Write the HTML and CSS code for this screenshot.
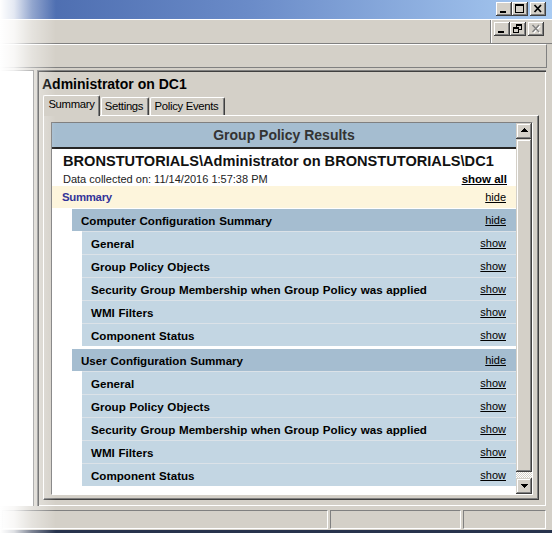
FILE: index.html
```html
<!DOCTYPE html>
<html lang="en">
<head>
<meta charset="utf-8">
<title>Group Policy Results</title>
<link rel="stylesheet" href="styles.css">
</head>
<body>
<div class="window">
  <div class="titlebar">
    <span class="cbtn"><svg viewBox="0 0 16 14" width="16" height="14"><rect x="4" y="9" width="6" height="2" fill="#000"/></svg></span>
    <span class="cbtn"><svg viewBox="0 0 16 14" width="16" height="14"><path fill="#000" fill-rule="evenodd" d="M3 2h9v9H3z M4 4h7v6H4z"/></svg></span>
    <span class="cbtn gap"><svg viewBox="0 0 16 14" width="16" height="14"><path stroke="#000" stroke-width="1.7" fill="none" d="M4.5 3 L11 10 M11 3 L4.5 10"/></svg></span>
  </div>
  <div class="menubar">
    <div class="mdi-btns">
      <span class="cbtn"><svg viewBox="0 0 16 14" width="16" height="14"><rect x="4" y="9" width="6" height="2" fill="#000"/></svg></span>
      <span class="cbtn"><svg viewBox="0 0 16 14" width="16" height="14"><path fill="#000" fill-rule="evenodd" d="M6 2h6v6H6z M7 4h4v3H7z"/><rect x="3" y="5" width="6" height="6" fill="#d4d0c8"/><path fill="#000" fill-rule="evenodd" d="M3 5h6v6H3z M4 7h4v3H4z"/></svg></span>
      <span class="cbtn gap"><svg viewBox="0 0 16 14" width="16" height="14"><path stroke="#fff" stroke-width="1.5" fill="none" d="M5.5 4 L12 11 M12 4 L5.5 11"/><path stroke="#808080" stroke-width="1.5" fill="none" d="M4.5 3 L11 10 M11 3 L4.5 10"/></svg></span>
    </div>
  </div>
  <div class="toolbar"></div>
  <div class="main">
    <div class="leftpane"></div>
    <div class="rightpane">
      <div class="heading">Administrator on DC1</div>
      <div class="tabs">
        <span class="tab tab-active">Summary</span>
        <span class="tab tab-settings">Settings</span>
        <span class="tab tab-events">Policy Events</span>
      </div>
      <div class="tabpanel">
        <div class="browser">
          <div class="report">
            <div class="gp-title">Group Policy Results</div>
            <div class="gp-info">
              <div class="gp-user">BRONSTUTORIALS\Administrator on BRONSTUTORIALS\DC1</div>
              <div class="gp-date"><span>Data collected on: 11/14/2016 1:57:38 PM</span><span class="link showall">show all</span></div>
            </div>
            <div class="summary-row"><span class="summary-label">Summary</span><span class="link">hide</span></div>
            <div class="section">
              <div class="sec-head"><span>Computer Configuration Summary</span><span class="link">hide</span></div>
              <div class="row"><span>General</span><span class="link">show</span></div>
              <div class="row"><span>Group Policy Objects</span><span class="link">show</span></div>
              <div class="row"><span>Security Group Membership when Group Policy was applied</span><span class="link">show</span></div>
              <div class="row"><span>WMI Filters</span><span class="link">show</span></div>
              <div class="row"><span>Component Status</span><span class="link">show</span></div>
            </div>
            <div class="section section-user">
              <div class="sec-head"><span>User Configuration Summary</span><span class="link">hide</span></div>
              <div class="row"><span>General</span><span class="link">show</span></div>
              <div class="row"><span>Group Policy Objects</span><span class="link">show</span></div>
              <div class="row"><span>Security Group Membership when Group Policy was applied</span><span class="link">show</span></div>
              <div class="row"><span>WMI Filters</span><span class="link">show</span></div>
              <div class="row"><span>Component Status</span><span class="link">show</span></div>
            </div>
          </div>
          <div class="vscroll">
            <div class="sbtn"><svg viewBox="0 0 16 16" width="16" height="16"><path fill="#000" d="M5 9h7v-1h-1v-1h-1v-1h-1v-1h-1v1h-1v1h-1v1h-1z"/></svg></div>
            <div class="thumb"></div>
            <div class="track"></div>
            <div class="sbtn"><svg viewBox="0 0 16 16" width="16" height="16"><path fill="#000" d="M5 6h7v1h-1v1h-1v1h-1v1h-1v-1h-1v-1h-1v-1h-1z"/></svg></div>
          </div>
        </div>
      </div>
    </div>
  </div>
  <div class="statusbar">
    <div class="spanel sp1"></div>
    <div class="spanel sp2"></div>
    <div class="spanel sp3"></div>
  </div>
  <div class="bottomedge"></div>
  <div class="fade"></div>
</div>
</body>
</html>
```

FILE: styles.css
```css
* { box-sizing: border-box; }
html, body { margin: 0; padding: 0; }
body {
  width: 552px;
  height: 533px;
  overflow: hidden;
  background: #d4d0c8;
  font-family: "Liberation Sans", Arial, sans-serif;
  color: #000;
}
.window {
  position: relative;
  width: 552px;
  height: 533px;
  display: flex;
  flex-direction: column;
  background: #d4d0c8;
}

/* caption */
.titlebar {
  height: 19px;
  flex: none;
  display: flex;
  justify-content: flex-end;
  align-items: flex-start;
  padding: 2px 6px 0 0;
  background: linear-gradient(to right, #4767ab 0%, #6a8bc8 45%, #a9cbf2 100%);
}
.cbtn {
  display: block;
  width: 16px;
  height: 14px;
  background: #d4d0c8;
  box-shadow: inset -1px -1px #404040, inset 1px 1px #fff, inset -2px -2px #808080, inset 2px 2px #d4d0c8;
}
.cbtn svg { display: block; }
.cbtn.gap { margin-left: 2px; }

.menubar {
  height: 25px;
  flex: none;
  border-top: 1px solid #fff;
  border-bottom: 1px solid #808080;
  display: flex;
  justify-content: flex-end;
}
.mdi-btns {
  display: flex;
  align-items: flex-start;
  padding: 2px 8px 0 2px;
  border-left: 1px solid #fff;
  box-shadow: -1px 0 #808080;
}

.toolbar {
  height: 24px;
  flex: none;
  border-top: 1px solid #fff;
  border-bottom: 1px solid #808080;
  border-right: 1px solid #808080;
  width: 547px;
}

/* main area */
.main {
  flex: none;
  margin-top: 2px;
  height: 436px;
  display: flex;
  gap: 3px;
}
.leftpane {
  width: 34px;
  background: #fff;
  border-top: 1px solid #808080;
  border-right: 1px solid #808080;
}
.rightpane {
  width: 509px;
  padding: 6px 0 0 5px;
  box-shadow: inset 1px 1px #808080, inset 2px 2px #404040, inset -1px -1px #fff, inset -2px -2px #d4d0c8;
}
.heading {
  font-weight: bold;
  font-size: 14px;
  line-height: 16px;
  height: 16px;
  white-space: nowrap;
}
.tabs {
  margin: 3px 0 0 1px;
  height: 20px;
  display: flex;
  align-items: flex-end;
}
.tab {
  height: 18px;
  font-size: 11.3px;
  letter-spacing: -0.3px;
  line-height: 16px;
  text-align: center;
  white-space: nowrap;
  background: #d4d0c8;
  border-top: 1px solid #fff;
  border-left: 1px solid #fff;
  border-right: 1px solid #404040;
  box-shadow: inset -1px 0 #808080;
  border-radius: 2px 2px 0 0;
}
.tab-active {
  position: relative;
  z-index: 1;
  width: 57px;
  height: 21px;
  margin-bottom: -1px;
}
.tab-settings { width: 48px; margin-left: 1px; padding-right: 2px; }
.tab-events { width: 75px; margin-left: 1px; padding-right: 2px; }

.tabpanel {
  margin-left: 1px;
  width: 496px;
  height: 385px;
  padding: 6px 5px 4px 7px;
  border-top: 1px solid #fff;
  border-left: 1px solid #fff;
  border-right: 1px solid #404040;
  border-bottom: 1px solid #404040;
  box-shadow: inset -1px -1px #808080;
}
.browser {
  width: 482px;
  height: 373px;
  border: 1px solid;
  border-color: #808080 #fff #fff #808080;
  display: flex;
}
.report {
  width: 464px;
  height: 371px;
  background: #fff;
  overflow: hidden;
}
.link {
  text-decoration: underline;
  font-weight: normal;
  font-size: 11px;
  letter-spacing: 0;
  word-spacing: 0;
  color: #000;
}
.gp-title {
  height: 24px;
  line-height: 24px;
  background: #a5bdd0;
  color: #333;
  font-weight: bold;
  font-size: 14px;
  text-align: center;
  border-bottom: 2px solid #262626;
  box-sizing: content-box;
}
.gp-info {
  height: 37px;
  padding: 3px 9px 0 11px;
}
.gp-user {
  font-weight: bold;
  font-size: 14.6px;
  line-height: 18px;
  white-space: nowrap;
  color: #111;
}
.gp-date {
  margin-top: 3px;
  line-height: 13px;
  font-size: 11px;
  display: flex;
  justify-content: space-between;
  align-items: baseline;
  color: #222;
}
.gp-date .showall {
  font-weight: bold;
  font-size: 11.5px;
}
.summary-row {
  height: 22px;
  background: #fdf5dc;
  display: flex;
  align-items: center;
  justify-content: space-between;
  padding: 0 10px 0 10px;
}
.summary-label {
  font-weight: bold;
  font-size: 11.4px;
  letter-spacing: -0.3px;
  color: #333399;
}
.section {
  margin: 1px 0 0 20px;
  font-weight: bold;
  font-size: 11.6px;
  word-spacing: 0.5px;
}
.section-user { margin-top: 3px; }
.sec-head {
  height: 22px;
  background: #a5bdd0;
  display: flex;
  align-items: center;
  justify-content: space-between;
  padding: 0 10px 0 9px;
  white-space: nowrap;
}
.row {
  margin-left: 10px;
  height: 23px;
  border-top: 1px solid #dbe2e8;
  background: #c3d6e3;
  display: flex;
  align-items: center;
  justify-content: space-between;
  padding: 0 10px 0 9px;
  white-space: nowrap;
}

/* scrollbar */
.vscroll {
  width: 16px;
  height: 371px;
  display: flex;
  flex-direction: column;
}
.sbtn, .thumb {
  background: #d4d0c8;
  box-shadow: inset -1px -1px #404040, inset 1px 1px #d4d0c8, inset -2px -2px #808080, inset 2px 2px #fff;
}
.sbtn { height: 16px; flex: none; }
.sbtn svg { display: block; }
.thumb { height: 333px; flex: none; }
.track {
  flex: 1;
  background: repeating-conic-gradient(#fff 0 25%, #d4d0c8 0 50%) 0 0 / 2px 2px;
}

/* status bar */
.statusbar {
  flex: none;
  margin-top: 2px;
  height: 22px;
  padding: 2px 0 0 2px;
  display: flex;
  gap: 2px;
}
.spanel {
  height: 19px;
  border: 1px solid;
  border-color: #808080 #fff #fff #808080;
}
.sp1 { width: 326px; }
.sp2 { width: 131px; }
.sp3 { width: 83px; }
.bottomedge {
  flex: none;
  height: 3px;
  background: #27334d;
}

/* screenshot edge fade */
.fade {
  position: absolute;
  left: 0;
  top: 0;
  width: 56px;
  height: 533px;
  pointer-events: none;
  background: linear-gradient(to right, #fff 0px, rgba(255,255,255,0.85) 14px, rgba(255,255,255,0.4) 32px, rgba(255,255,255,0) 56px);
}
```
